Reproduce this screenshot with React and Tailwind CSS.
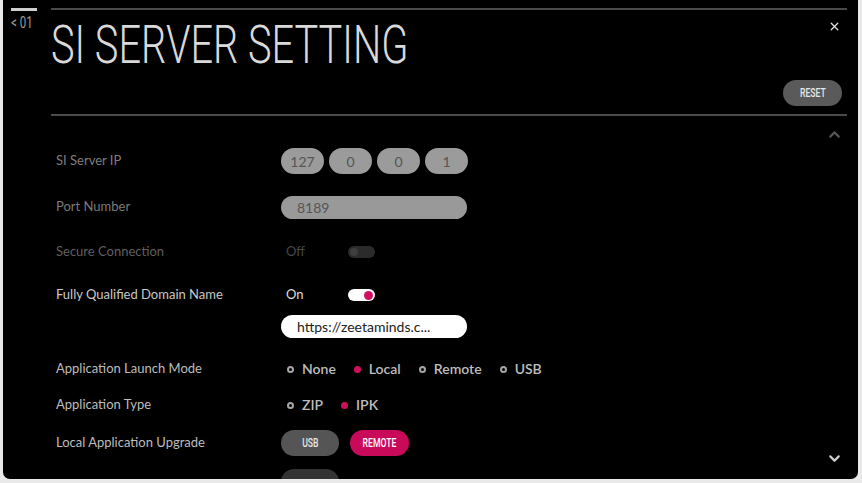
import { ChevronUp, ChevronDown, X } from 'lucide-react';

const PINK = 'bg-[#c9095a]';

function Radio({ label, on }) {
  return (
    <span className="flex items-center gap-[8px] shrink-0">
      <span
        className={`w-[7px] h-[7px] shrink-0 rounded-full ${
          on ? 'bg-[#d0105f]' : 'border-2 border-[#a5a5a5]'
        }`}
      />
      <span className="text-[14px] leading-none font-semibold text-[#bdbdbd]">{label}</span>
    </span>
  );
}

function Row({ label, dim, h, children, top }) {
  return (
    <div className={`flex shrink-0 ${top ? 'items-start' : 'items-center'}`} style={{ height: h }}>
      <div className={`w-[225px] shrink-0 text-[13px] ${dim}`}>{label}</div>
      <div className="flex-1">{children}</div>
    </div>
  );
}

function Narrow({ children, className }) {
  return (
    <span className={`inline-block scale-x-[0.72] font-['Roboto'] ${className}`}>{children}</span>
  );
}

export default function App() {
  const ip = ['127', '0', '0', '1'];
  return (
    <div className="w-[862px] h-[483px] bg-[#e9e9e9] font-['Lato',sans-serif]">
      <div className="ml-[3px] w-[855px] h-[479px] bg-black rounded-b-[7px] overflow-hidden flex">
        {/* marcador lateral */}
        <div className="w-[48px] shrink-0 pl-[8px] pt-[8px]">
          <div className="w-[26px] h-[3px] bg-[#cfcfcf]" />
          <div className="mt-[3px] text-[16px] leading-none text-[#9a9a9a] whitespace-nowrap">
            <Narrow className="origin-left">&lt; 01</Narrow>
          </div>
        </div>

        {/* columna principal */}
        <div className="w-[796px] shrink-0 pt-[8px] flex flex-col">
          <div className="h-[2px] shrink-0 bg-[#4a4a4a]" />
          <div className="flex h-[104px] shrink-0">
            <div className="flex-1 pt-[9px]">
              <span className="inline-block origin-left scale-x-[0.75] font-['Roboto'] font-light text-[53px] leading-none text-[#d9d9d9] whitespace-nowrap">
                SI SERVER SETTING
              </span>
            </div>
            <div className="w-[60px] flex flex-col items-end pr-[5px]">
              <X className="mt-[10px] mr-[1px] w-[13px] h-[13px] text-[#dedede]" strokeWidth={2.5} />
              <button className="mt-[47px] w-[59px] h-[26px] rounded-full bg-[#5a5a5a] text-[12px] font-medium text-[#e6e6e6] flex items-center justify-center">
                <Narrow>RESET</Narrow>
              </button>
            </div>
          </div>
          <div className="h-[2px] shrink-0 bg-[#4a4a4a]" />

          {/* contenido desplazable */}
          <div className="flex flex-1 min-h-0 overflow-hidden">
            <div className="flex-1 pl-[5px] pt-[18px] flex flex-col">
              <Row label="SI Server IP" dim="text-[#7d7d7d]" h={54}>
                <div className="flex gap-[5px]">
                  {ip.map((v, i) => (
                    <div
                      key={i}
                      className="w-[43px] h-[26px] rounded-full bg-[#9b9b9b] text-[#555] text-[14px] flex items-center justify-center"
                    >
                      {v}
                    </div>
                  ))}
                </div>
              </Row>
              <Row label="Port Number" dim="text-[#7a7a7a]" h={38}>
                <div className="w-[186px] h-[23px] rounded-full bg-[#999] text-[#555] text-[14px] pl-[16px] flex items-center">
                  8189
                </div>
              </Row>
              <Row label="Secure Connection" dim="text-[#5f5f5f]" h={52}>
                <div className="flex items-center">
                  <span className="w-[67px] pl-[5px] text-[13px] text-[#474747]">Off</span>
                  <span className="w-[27px] h-[12px] rounded-full bg-[#2b2b2b] flex items-center pl-[2px]">
                    <span className="w-[8px] h-[8px] rounded-full bg-[#3e3e3e]" />
                  </span>
                </div>
              </Row>
              <Row label="Fully Qualified Domain Name" dim="text-[#c8c8c8]" h={34}>
                <div className="flex items-center">
                  <span className="w-[67px] pl-[5px] text-[13px] text-[#dcdcdc]">On</span>
                  <span className="w-[27px] h-[12px] rounded-full bg-white flex items-center justify-end pr-[2px]">
                    <span className="w-[9px] h-[9px] rounded-full bg-[#d0105f]" />
                  </span>
                </div>
              </Row>
              <Row label="" h={39} top>
                <div className="mt-[3px] w-[186px] h-[23px] rounded-full bg-white text-[#222] text-[14px] pl-[16px] flex items-center">
                  https://zeetaminds.c...
                </div>
              </Row>
              <Row label="Application Launch Mode" dim="text-[#bdbdbd]" h={36}>
                <div className="flex pl-[6px] gap-[18px]">
                  <Radio label="None" />
                  <Radio label="Local" on />
                  <Radio label="Remote" />
                  <Radio label="USB" />
                </div>
              </Row>
              <Row label="Application Type" dim="text-[#bdbdbd]" h={36}>
                <div className="flex pl-[6px] gap-[18px]">
                  <Radio label="ZIP" />
                  <Radio label="IPK" on />
                </div>
              </Row>
              <Row label="Local Application Upgrade" dim="text-[#bdbdbd]" h={40}>
                <div className="flex gap-[11px]">
                  <button className="w-[58px] h-[26px] rounded-full bg-[#555] text-[12px] font-medium text-[#e6e6e6] flex items-center justify-center">
                    <Narrow>USB</Narrow>
                  </button>
                  <button className={`w-[59px] h-[26px] rounded-full ${PINK} text-[12px] font-medium text-white flex items-center justify-center`}>
                    <Narrow>REMOTE</Narrow>
                  </button>
                </div>
              </Row>
              <Row label="" h={30} top>
                <div className="mt-[6px] w-[58px] h-[26px] rounded-full bg-[#333]" />
              </Row>
            </div>
            <div className="w-[26px] shrink-0 flex flex-col items-center justify-between pt-[10px] pb-[12px]">
              <ChevronUp className="w-[17px] h-[17px] text-[#555]" strokeWidth={3} />
              <ChevronDown className="w-[17px] h-[17px] text-[#cfcfcf]" strokeWidth={3} />
            </div>
          </div>
        </div>
      </div>
    </div>
  );
}
